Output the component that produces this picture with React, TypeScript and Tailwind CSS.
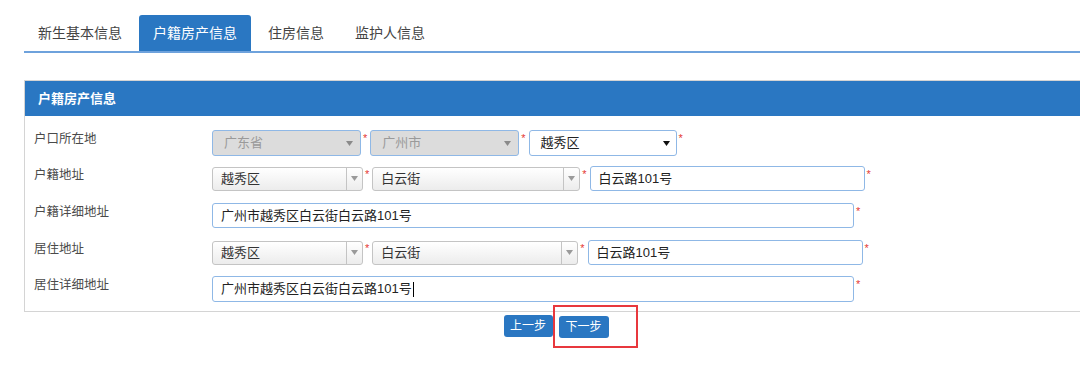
import React from "react";

const font = { fontFamily: '"Liberation Sans", "Noto Sans CJK SC", sans-serif' };

function Star() {
  return <span className="self-start mt-[3px] ml-[2px] mr-[3px] text-[11px] leading-none text-[#e53935]">*</span>;
}

function Tri({ color }: { color: string }) {
  return (
    <svg width="7" height="5" viewBox="0 0 7 5">
      <path d="M0 0 L7 0 L3.5 5 Z" fill={color} />
    </svg>
  );
}

// disabled select (grey body, light blue border)
function LockedSelect({ text, w }: { text: string; w: string }) {
  return (
    <div className={`flex h-[26px] ${w} items-center justify-between rounded-[3px] border border-[#8fb8e6] bg-[#dcdcdc] pl-[11px] pr-[7px]`}>
      <span className="text-[13px] text-[#9a9a9a]">{text}</span>
      <Tri color="#8a8a8a" />
    </div>
  );
}

// combo box with a separate arrow section
function Combo({ text, w }: { text: string; w: string }) {
  return (
    <div className={`flex h-[24px] ${w} items-stretch rounded-[3px] border border-[#c4c4c4] bg-gradient-to-b from-white to-[#ececec]`}>
      <span className="flex flex-1 items-center pl-[8px] text-[13px] text-[#333]">{text}</span>
      <span className="flex w-[16px] items-center justify-center border-l border-[#c4c4c4]">
        <Tri color="#9a9a9a" />
      </span>
    </div>
  );
}

function TextBox({ value, w, caret }: { value: string; w: string; caret?: boolean }) {
  return (
    <div className={`flex h-[25px] ${w} items-center rounded-[3px] border border-[#8fb8e6] bg-white pl-[8px] text-[13px] text-[#222]`}>
      {value}
      {caret && <span className="ml-[1px] inline-block h-[15px] w-px bg-black" />}
    </div>
  );
}

function Row({ label, children, className }: { label: string; children: React.ReactNode; className?: string }) {
  return (
    <div className={`flex items-start ${className ?? ""}`}>
      <div className="w-[187px] pl-[9px] text-[12.5px] leading-[18px] text-[#4a4a4a]">{label}</div>
      <div className="flex items-center">{children}</div>
    </div>
  );
}

export default function App() {
  const tabs = ["新生基本信息", "户籍房产信息", "住房信息", "监护人信息"];
  return (
    <div className="h-[378px] w-[1080px] overflow-hidden bg-white" style={font}>
      {/* tabs */}
      <div className="ml-[24px] mt-[15px] flex gap-[3px] border-b-2 border-[#6ea2dc]">
        {tabs.map((t, i) => (
          <div
            key={t}
            className={`flex h-[36px] items-center rounded-t-[3px] px-[14px] text-[14px] ${
              i === 1 ? "bg-[#2a77c2] text-white" : "text-[#444]"
            }`}
          >
            {t}
          </div>
        ))}
      </div>

      {/* panel */}
      <div className="ml-[24px] mt-[27px] w-[1080px] border border-[#d4d4d4]">
        <div className="flex h-[35px] items-center bg-[#2a77c2] pl-[13px] text-[13px] font-bold text-white">户籍房产信息</div>
        <div className="pb-[9px] pt-[13px]">
          <Row label="户口所在地" className="pt-px">
            <LockedSelect text="广东省" w="w-[149px]" />
            <Star />
            <LockedSelect text="广州市" w="w-[149px]" />
            <Star />
            <div className="flex h-[26px] w-[148px] items-center justify-between rounded-[3px] border border-[#8fb8e6] bg-white pl-[11px] pr-[6px]">
              <span className="text-[13px] text-[#222]">越秀区</span>
              <Tri color="#111" />
            </div>
            <Star />
          </Row>
          <Row label="户籍地址" className="mt-[10px]">
            <Combo text="越秀区" w="w-[151px]" />
            <Star />
            <Combo text="白云街" w="w-[208px]" />
            <Star />
            <TextBox value="白云路101号" w="w-[275px]" />
            <Star />
          </Row>
          <Row label="户籍详细地址" className="mt-[12px]">
            <TextBox value="广州市越秀区白云街白云路101号" w="w-[642px]" />
            <Star />
          </Row>
          <Row label="居住地址" className="mt-[12px]">
            <Combo text="越秀区" w="w-[151px]" />
            <Star />
            <Combo text="白云街" w="w-[206px]" />
            <Star />
            <TextBox value="白云路101号" w="w-[275px]" />
            <Star />
          </Row>
          <Row label="居住详细地址" className="mt-[11px]">
            <TextBox value="广州市越秀区白云街白云路101号" w="w-[642px] h-[26px] border-[#6b9fdc]" caret />
            <Star />
          </Row>
        </div>
      </div>

      {/* actions */}
      <div className="mt-[2px] flex justify-center pl-[32px]">
        <div className="flex items-center gap-[6px]">
          <button className="h-[22px] w-[49px] rounded-[3px] bg-[#2a77c2] text-[12px] text-white">上一步</button>
          <div className="relative">
            <button className="h-[22px] w-[50px] rounded-[3px] bg-[#2a77c2] text-[12px] text-white">下一步</button>
            <div className="absolute left-[-6px] top-[-9px] h-[43px] w-[85px] border-2 border-[#e8383d]" />
          </div>
        </div>
      </div>
    </div>
  );
}
